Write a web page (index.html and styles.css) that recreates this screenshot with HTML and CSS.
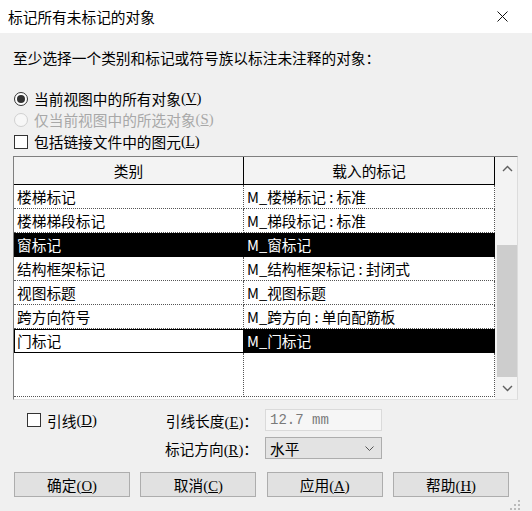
FILE: index.html
```html
<!DOCTYPE html>
<html lang="zh-CN">
<head>
  <meta charset="UTF-8" />
  <title>标记所有未标记的对象</title>
  <link rel="stylesheet" href="styles.css">
</head>
<body>

  <div class="dialog">

    <!-- Title bar -->
    <div class="titlebar">
      <span class="title">标记所有未标记的对象</span>
      <svg class="close" width="11" height="11" viewBox="0 0 11 11">
        <path d="M0.5 0.5L10.5 10.5M10.5 0.5L0.5 10.5" stroke="#111" stroke-width="1" fill="none"/>
      </svg>
    </div>

    <div class="main">
      <p class="prompt">至少选择一个类别和标记或符号族以标注未注释的对象：</p>

      <!-- Scope options -->
      <div class="options">
        <label class="opt"><span class="radio checked"></span>当前视图中的所有对象<span class="key">(<u>V</u>)</span></label>
        <label class="opt disabled"><span class="radio"></span>仅当前视图中的所选对象<span class="key">(<u>S</u>)</span></label>
        <label class="opt"><span class="check"></span>包括链接文件中的图元<span class="key">(<u>L</u>)</span></label>
      </div>

      <!-- Category / tag list -->
      <div class="grid">
        <div class="list">
          <div class="row head"><div class="cell">类别</div><div class="cell">载入的标记</div></div>
          <div class="row"><div class="cell">楼梯标记</div><div class="cell">M_楼梯标记 : 标准</div></div>
          <div class="row"><div class="cell">楼梯梯段标记</div><div class="cell">M_梯段标记 : 标准</div></div>
          <div class="row sel"><div class="cell">窗标记</div><div class="cell">M_窗标记</div></div>
          <div class="row"><div class="cell">结构框架标记</div><div class="cell">M_结构框架标记 : 封闭式</div></div>
          <div class="row"><div class="cell">视图标题</div><div class="cell">M_视图标题</div></div>
          <div class="row"><div class="cell">跨方向符号</div><div class="cell">M_跨方向 : 单向配筋板</div></div>
          <div class="row sel focus"><div class="cell">门标记</div><div class="cell">M_门标记</div></div>
          <div class="row filler"><div class="cell"></div><div class="cell"></div></div>
        </div>
        <div class="scrollbar">
          <div class="arrow">
            <svg width="11" height="7" viewBox="0 0 11 7"><path d="M1 6L5.5 1.5L10 6" stroke="#606060" stroke-width="1.4" fill="none"/></svg>
          </div>
          <div class="track"><div class="thumb"></div></div>
          <div class="arrow">
            <svg width="11" height="7" viewBox="0 0 11 7"><path d="M1 1L5.5 5.5L10 1" stroke="#606060" stroke-width="1.4" fill="none"/></svg>
          </div>
        </div>
      </div>

      <!-- Leader settings -->
      <div class="settings">
        <label class="opt leader"><span class="check"></span>引线<span class="key">(<u>D</u>)</span></label>
        <span class="field-label">引线长度<span class="key">(<u>E</u>)</span>：</span>
        <div class="input">12.7 mm</div>

        <span class="field-label row2">标记方向<span class="key">(<u>R</u>)</span>：</span>
        <div class="select">
          <span>水平</span>
          <svg width="9" height="5" viewBox="0 0 9 5"><path d="M0.5 0.5L4.5 4.5L8.5 0.5" stroke="#555" stroke-width="1" fill="none"/></svg>
        </div>
      </div>

      <!-- Buttons -->
      <div class="buttons">
        <button>确定<span class="key">(<u>O</u>)</span></button>
        <button>取消<span class="key">(<u>C</u>)</span></button>
        <button>应用<span class="key">(<u>A</u>)</span></button>
        <button>帮助<span class="key">(<u>H</u>)</span></button>
      </div>
    </div>

    <svg class="grip" width="10" height="10" viewBox="0 0 10 10">
      <rect x="8" y="0" width="2" height="2" fill="#bbb"/>
      <rect x="4" y="4" width="2" height="2" fill="#bbb"/>
      <rect x="8" y="4" width="2" height="2" fill="#bbb"/>
      <rect x="0" y="8" width="2" height="2" fill="#bbb"/>
      <rect x="4" y="8" width="2" height="2" fill="#bbb"/>
      <rect x="8" y="8" width="2" height="2" fill="#bbb"/>
    </svg>
  </div>

</body>
</html>
```

FILE: styles.css
```css
* {
  margin: 0;
  padding: 0;
  box-sizing: border-box;
}

body {
  font-family: "Noto Sans CJK SC", "Noto Sans", sans-serif;
  font-size: 14.7px;
  color: #000;
  background: #f0f0f0;
}

.dialog {
  position: relative;
  width: 532px;
  height: 511px;
  background: #f0f0f0;
  overflow: hidden;
}

.titlebar {
  display: flex;
  justify-content: space-between;
  align-items: center;
  height: 33px;
  padding-left: 8px;
  background: #fff;
}

.close {
  margin-right: 24px;
}

.main {
  padding: 0 14px 0 13px;
}

.prompt {
  padding-top: 15px;
  line-height: 20px;
}

.key {
  font-family: "Liberation Serif", serif;
}

/* radios and checkboxes */
.options {
  margin-top: 20px;
}

.opt {
  display: flex;
  align-items: center;
  height: 21px;
}

.opt:last-child {
  margin-top: 1px;
}

.opt.disabled {
  color: #a8a8a8;
}

.radio,
.check {
  width: 14px;
  height: 14px;
  margin: 0 6px 0 1px;
  background: #fff;
  flex-shrink: 0;
}

.radio {
  border: 1px solid #333;
  border-radius: 50%;
  display: flex;
  align-items: center;
  justify-content: center;
}

.radio.checked::after {
  content: "";
  width: 8px;
  height: 8px;
  border-radius: 50%;
  background: #333;
}

.disabled .radio {
  border-color: #d0d0d0;
  background: #f7f7f7;
}

.check {
  border: 1px solid #333;
}

/* list */
.grid {
  display: flex;
  width: 505px;
  height: 244px;
  margin-top: 4px;
  border: 1px solid;
  border-color: #7f7f7f #dcdcdc #e2e2e2 #7f7f7f;
  background: #fff;
}

.list {
  display: flex;
  flex-direction: column;
  width: 481px;
}

.row {
  display: grid;
  grid-template-columns: 230px 251px;
  height: 24px;
}

.row .cell {
  padding-left: 3px;
  line-height: 23px;
  white-space: nowrap;
  border-right: 1px dotted #555;
  border-bottom: 1px dotted #555;
}

.row.head {
  height: 28px;
  background: #f3f3f3;
}

.row.head .cell {
  padding-left: 0;
  text-align: center;
  line-height: 27px;
  border-right: 1px solid #000;
  border-bottom: 1px solid #000;
}

.row.sel .cell {
  background: #000;
  color: #fff;
  border-color: #000;
}

.row.focus .cell:first-child {
  background: #fff;
  color: #000;
  border: 1px solid #000;
  line-height: 22px;
  padding-left: 2px;
}

.row.filler {
  flex: 1;
  margin-bottom: 2px;
}

.scrollbar {
  display: flex;
  flex-direction: column;
  width: 22px;
  background: #f3f3f3;
}

.arrow {
  display: flex;
  align-items: center;
  justify-content: center;
  height: 22px;
  padding-left: 2px;
}

.track {
  flex: 1;
  padding: 66px 0 0 2px;
}

.thumb {
  height: 132px;
  background: #cdcdcd;
}

/* leader settings */
.settings {
  display: grid;
  grid-template-columns: 121px 103px 117px;
  grid-template-rows: 22px 22px;
  column-gap: 7px;
  row-gap: 6px;
  margin: 9px 0 0 14px;
  align-items: center;
}

.leader .check {
  margin-left: 0;
}

.field-label {
  text-align: right;
  white-space: nowrap;
}

.field-label.row2 {
  grid-column: 2;
}

.input {
  height: 22px;
  padding-left: 4px;
  border: 1px solid #dadada;
  background: #f6f6f6;
  color: #7a7a7a;
  font-family: "Liberation Mono", monospace;
  font-size: 14px;
  line-height: 20px;
}

.select {
  display: flex;
  justify-content: space-between;
  align-items: center;
  height: 22px;
  padding: 0 7px 0 4px;
  border: 1px solid #adadad;
  background: #e3e3e3;
}

/* buttons */
.buttons {
  display: flex;
  justify-content: space-between;
  margin: 13px 9px 0 1px;
}

.buttons button {
  width: 116px;
  height: 25px;
  border: 1px solid #adadad;
  background: #e1e1e1;
  font-family: inherit;
  font-size: 14.7px;
  color: #000;
}

.grip {
  position: absolute;
  right: 12px;
  bottom: 1px;
}
```
